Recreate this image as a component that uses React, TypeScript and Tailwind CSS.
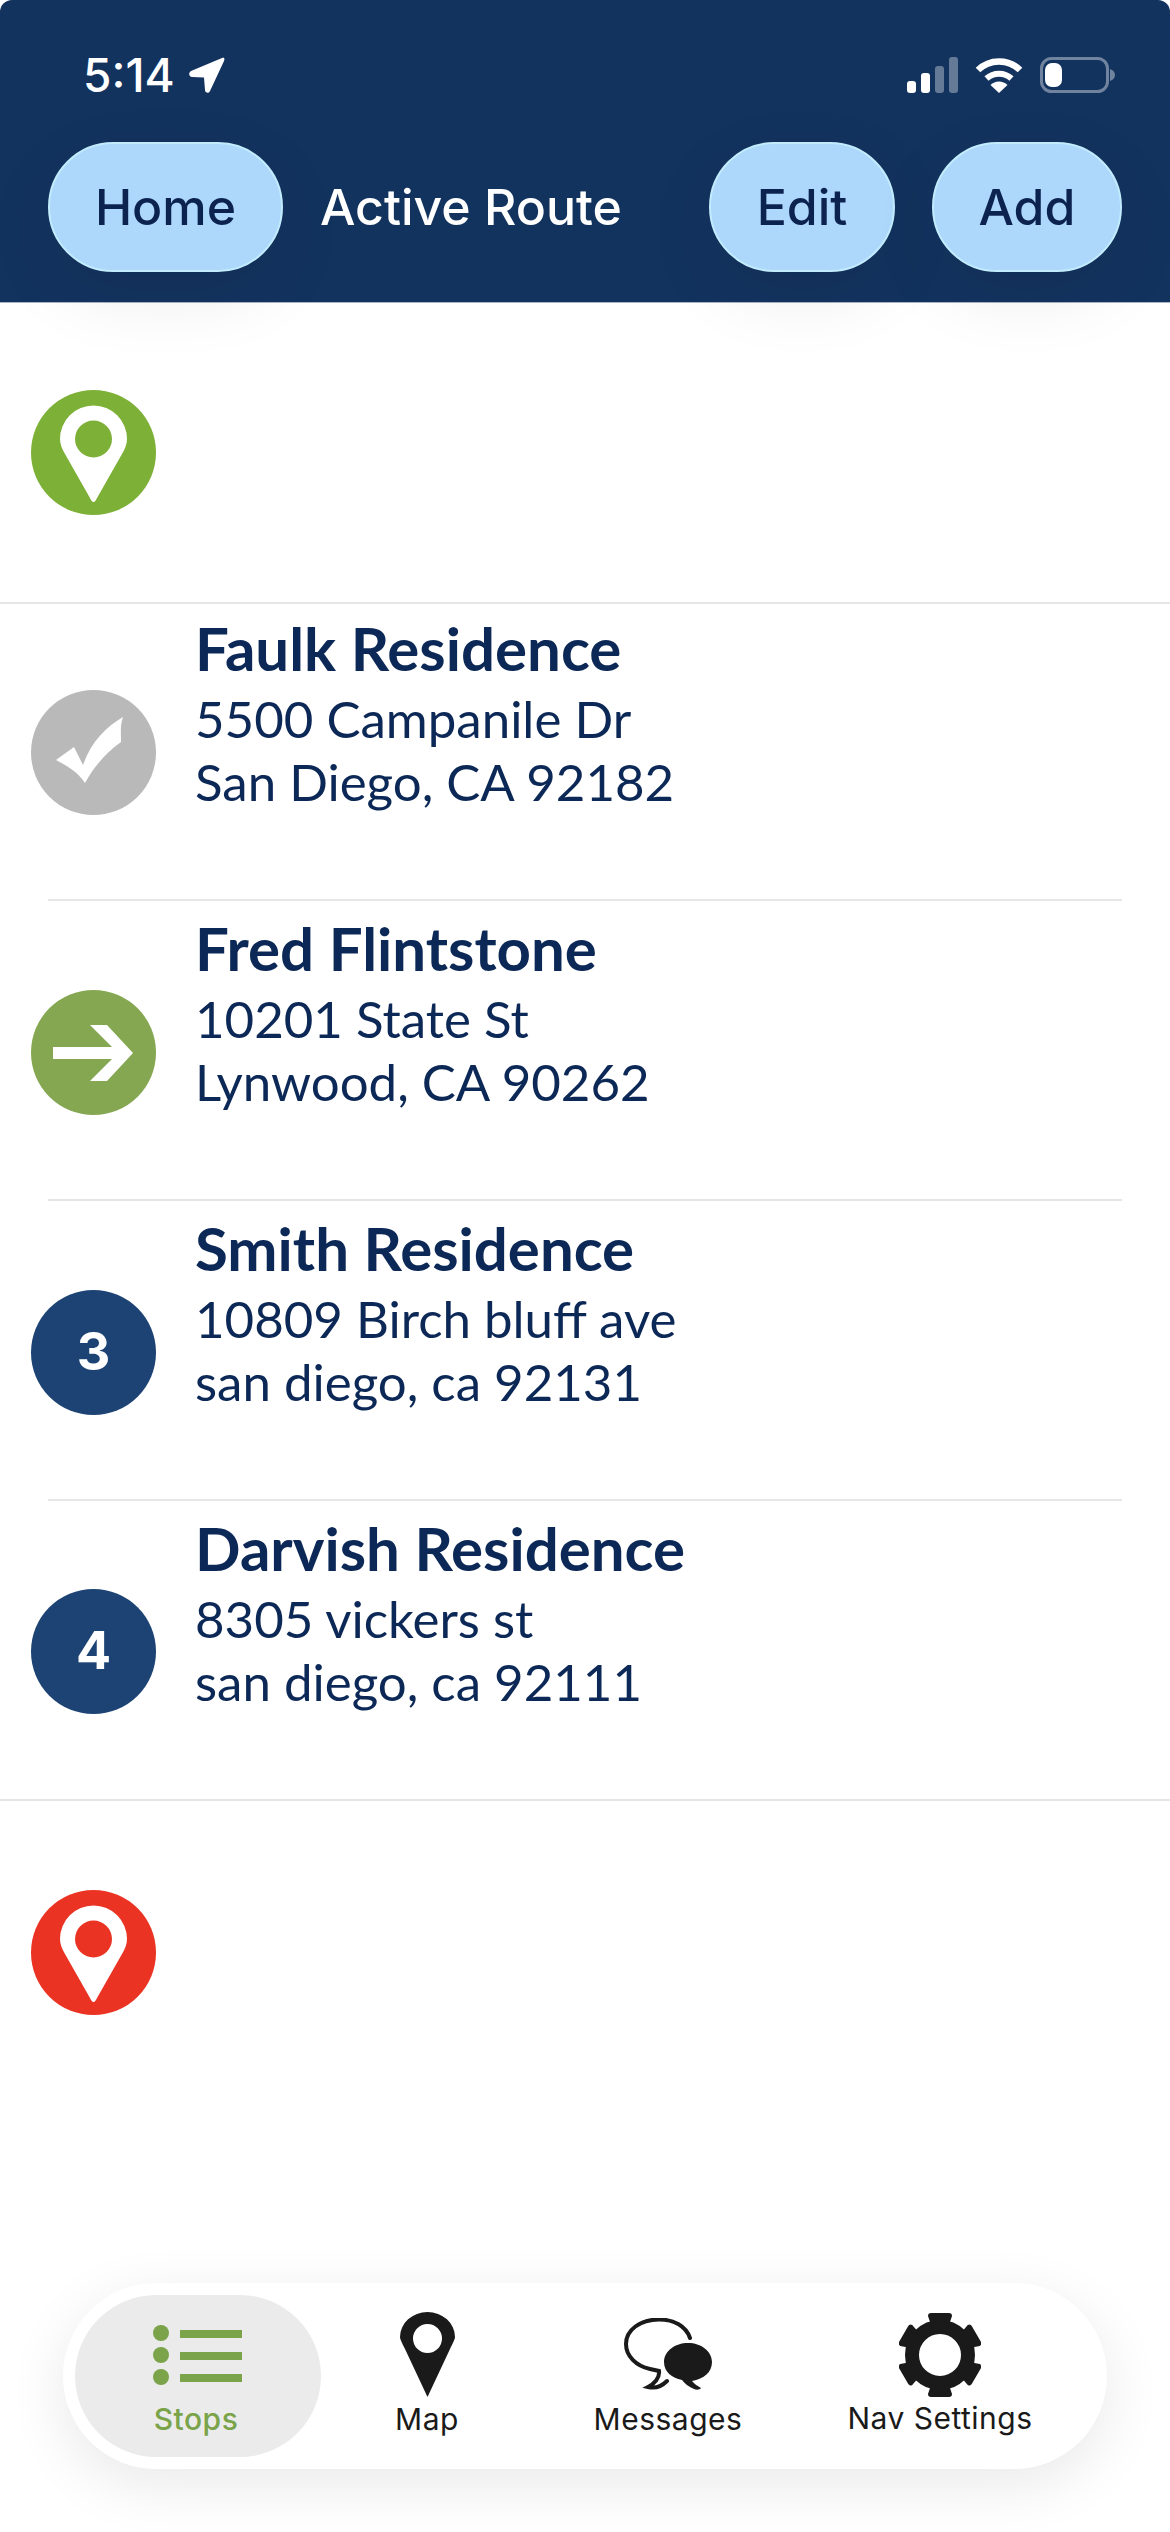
import type { ReactNode } from 'react';

const PIN = 'M62.5 112 C61 112 60 110 59 108 L34 64 C31 59 29 54 29 49 A33.5 33.5 0 0 1 96 49 C96 54 94 59 91 64 L66 108 C65 110 64 112 62.5 112 Z';
const GEAR_TOOTH = 'M29 3 Q29 0 32 0 H50 Q53 0 53 3 L50 12 H32 Z';

function Circle({ color, children }: { color: string; children: ReactNode }) {
  return (
    <svg viewBox="0 0 125 125" className="w-[125px] h-[125px] shrink-0">
      <circle cx="62.5" cy="62.5" r="62.5" fill={color} />
      {children}
    </svg>
  );
}

function PinBadge({ color }: { color: string }) {
  return (
    <Circle color={color}>
      <path d={PIN} fill="#fff" />
      <circle cx="62.5" cy="49" r="18.5" fill={color} />
    </Circle>
  );
}

function NumberBadge({ value }: { value: number }) {
  return (
    <div className="w-[125px] h-[125px] shrink-0 rounded-full bg-[#1c4373] flex items-center justify-center text-white text-[52px] font-bold">
      {value}
    </div>
  );
}

const CheckBadge = (
  <Circle color="#bab9ba">
    <path d="M25 70 L43 57 L52 75 C60 52 75 37 92 27 C89 35 90 44 90 52 C76 62 64 75 54 93 C46 81 36 76 25 70 Z" fill="#fff" />
  </Circle>
);

const ArrowBadge = (
  <Circle color="#85a752">
    <path d="M22 57 H81 L59 35 H76 L102 63 L76 91 H59 L81 69 H22 Z" fill="#fff" />
  </Circle>
);

interface Stop {
  name: string;
  street: string;
  city: string;
  badge: ReactNode;
}

const STOPS: Stop[] = [
  { name: 'Faulk Residence', street: '5500 Campanile Dr', city: 'San Diego, CA 92182', badge: CheckBadge },
  { name: 'Fred Flintstone', street: '10201 State St', city: 'Lynwood, CA 90262', badge: ArrowBadge },
  { name: 'Smith Residence', street: '10809 Birch bluff ave', city: 'san diego, ca 92131', badge: <NumberBadge value={3} /> },
  { name: 'Darvish Residence', street: '8305 vickers st', city: 'san diego, ca 92111', badge: <NumberBadge value={4} /> },
];

function HeaderButton({ label, width }: { label: string; width: string }) {
  return (
    <div className={`${width} h-[130px] rounded-[65px] bg-[#add7fb] border-2 border-[#c2ecfd] flex items-center justify-center text-[#0c2350] text-[50px] font-medium shadow-[0_24px_70px_rgba(0,0,0,0.08)]`}>
      {label}
    </div>
  );
}

function StatusBar() {
  return (
    <div className="h-[36px] flex items-center justify-between pl-[83px] pr-[55px]">
      <div className="flex items-center gap-[14px] text-white text-[46px] leading-none font-medium">
        <span>5:14</span>
        <svg viewBox="0 0 36 36" className="w-[36px] h-[36px]">
          <path d="M33 1 L2 14 C-1 16 0 20 3 20 L15 20.5 L16 33 C16 36 20 37 21 34 L35 4 C36 1 35 0 33 1 Z" fill="#fff" />
        </svg>
      </div>
      <div className="flex items-center">
        <svg viewBox="0 0 51 36" className="w-[51px] h-[36px]">
          <rect x="0" y="24" width="9" height="12" rx="3" fill="#fff" />
          <rect x="14" y="16" width="9" height="20" rx="3" fill="#fff" />
          <rect x="28" y="9" width="9" height="27" rx="3" fill="#fff" fillOpacity="0.35" />
          <rect x="42" y="0" width="9" height="36" rx="3" fill="#fff" fillOpacity="0.35" />
        </svg>
        <svg viewBox="0 0 48 36" className="w-[48px] h-[36px] ml-[17px]">
          <path d="M3 13 A30 30 0 0 1 45 13" fill="none" stroke="#fff" strokeWidth="6.5" />
          <path d="M11.5 21.5 A18.5 18.5 0 0 1 36.5 21.5" fill="none" stroke="#fff" strokeWidth="6" />
          <path d="M24 36 L15.5 28 A12 12 0 0 1 32.5 28 Z" fill="#fff" />
        </svg>
        <svg viewBox="0 0 75 36" className="w-[75px] h-[36px] ml-[17px]">
          <rect x="1.5" y="1.5" width="66" height="33" rx="10" fill="none" stroke="#fff" strokeOpacity="0.4" strokeWidth="3" />
          <rect x="5" y="6" width="17" height="24" rx="7" fill="#fff" />
          <path d="M70 12 C73 13 75 15 75 18 C75 21 73 23 70 24 Z" fill="#fff" fillOpacity="0.4" />
        </svg>
      </div>
    </div>
  );
}

function TabLabel({ children, active }: { children: string; active?: boolean }) {
  return (
    <span className={`text-[30px] leading-[36px] tracking-[0.5px] ${active ? 'text-[#7aa34a] font-medium' : 'text-[#1a1a1a]'}`}>
      {children}
    </span>
  );
}

function TabBar() {
  return (
    <div className="absolute left-[63px] top-[2283px] w-[1044px] h-[186px] rounded-[93px] bg-white shadow-[0_16px_60px_rgba(0,0,0,0.09)] p-[12px] pr-[30px] flex items-stretch">
      {/* Stops */}
      <div className="w-[246px] rounded-[81px] bg-[#ebebeb] flex flex-col items-center pt-[30px]">
        <svg viewBox="0 0 90 60" className="w-[90px] h-[60px]">
          <g fill="#7aa34a">
            <circle cx="8" cy="8" r="8" />
            <circle cx="8" cy="30" r="8" />
            <circle cx="8" cy="52" r="8" />
            <rect x="27" y="5" width="62" height="8" />
            <rect x="27" y="27" width="62" height="8" />
            <rect x="27" y="49" width="62" height="8" />
          </g>
        </svg>
        <div className="mt-[16px] mr-[4px]"><TabLabel active>Stops</TabLabel></div>
      </div>
      {/* Map */}
      <div className="w-[212px] flex flex-col items-center pt-[17px]">
        <svg viewBox="0 0 55 85" className="w-[55px] h-[85px]">
          <path fillRule="evenodd" d="M27.5 85 L5 37 C2 31 0 27 0 25 A27.5 25 0 0 1 55 25 C55 27 53 31 50 37 Z M27.5 12 A14.5 14.5 0 1 0 27.5 41 A14.5 14.5 0 1 0 27.5 12 Z" fill="#1a1a1a" />
        </svg>
        <div className="mt-[4px]"><TabLabel>Map</TabLabel></div>
      </div>
      {/* Messages */}
      <div className="w-[270px] flex flex-col items-center pt-[23px]">
        <svg viewBox="0 0 88 72" className="w-[88px] h-[72px]">
          <path d="M66 20 C62 8 50 1.5 35 1.5 C16 1.5 2 12 2 26 C2 38 12 48 26 51 L35 53 C36 60 30 66 24 69 C32 71 38 68 43 63" fill="none" stroke="#1a1a1a" strokeWidth="4" strokeLinecap="round" />
          <path d="M64 25 C77 25 88 33 88 44 C88 54 80 61 68 63 C70 66 74 68 77 70 C76 72 72 72 70 71 C65 69 61 66 58 62 C48 60 40 54 40 44 C40 33 51 25 64 25 Z" fill="#1a1a1a" />
        </svg>
        <div className="mt-[11px]"><TabLabel>Messages</TabLabel></div>
      </div>
      {/* Nav Settings */}
      <div className="flex-1 flex flex-col items-center pt-[18px]">
        <svg viewBox="0 0 82 84" className="w-[82px] h-[84px]">
          <circle cx="41" cy="42" r="28" fill="none" stroke="#1a1a1a" strokeWidth="14" />
          <g fill="#1a1a1a">
            <path d={GEAR_TOOTH} />
            <path d={GEAR_TOOTH} transform="rotate(60 41 42)" />
            <path d={GEAR_TOOTH} transform="rotate(120 41 42)" />
            <path d={GEAR_TOOTH} transform="rotate(180 41 42)" />
            <path d={GEAR_TOOTH} transform="rotate(240 41 42)" />
            <path d={GEAR_TOOTH} transform="rotate(300 41 42)" />
          </g>
        </svg>
        <div className="mt-[3px]"><TabLabel>Nav Settings</TabLabel></div>
      </div>
    </div>
  );
}

export default function App() {
  return (
    <div className="relative w-[1170px] h-[2532px] overflow-hidden bg-white font-['Inter',sans-serif]">
      {/* Header */}
      <header className="relative z-10 h-[303px] bg-[#13335f] pt-[57px] rounded-t-[12px] border-b border-[#a9b4c4]">
        <StatusBar />
        <div className="mt-[49px] pl-[48px] pr-[48px] flex items-center">
          <HeaderButton label="Home" width="w-[235px]" />
          <span className="ml-[37px] text-white text-[50px] font-medium">Active Route</span>
          <div className="ml-auto flex gap-[37px]">
            <HeaderButton label="Edit" width="w-[186px]" />
            <HeaderButton label="Add" width="w-[190px]" />
          </div>
        </div>
      </header>

      {/* Start */}
      <div className="h-[301px] pl-[31px] pt-[87px] border-b-2 border-[#e6e6e6]">
        <PinBadge color="#7db037" />
      </div>

      {/* Stops */}
      <div className="mt-[-3px]">
        {STOPS.map((stop, i) => (
          <div key={stop.name} className={`relative h-[300px] pl-[31px] flex items-center ${i === STOPS.length - 1 ? 'border-b-2 border-[#e6e6e6]' : ''}`}>
            {i < STOPS.length - 1 && <div className="absolute left-[48px] right-[48px] bottom-0 h-[2px] bg-[#e6e6e6]" />}
            <div className="mt-[2px]">{stop.badge}</div>
            <div className="ml-[39px] self-start pt-[8px] text-[#0c2856] font-['Lato',sans-serif]">
              <div className="text-[60px] leading-[78px] font-bold">{stop.name}</div>
              <div className="text-[51px] leading-[63px]">{stop.street}</div>
              <div className="text-[51px] leading-[63px]">{stop.city}</div>
            </div>
          </div>
        ))}
      </div>

      {/* End */}
      <div className="pl-[31px] pt-[89px]">
        <PinBadge color="#ea3323" />
      </div>

      <TabBar />
    </div>
  );
}
